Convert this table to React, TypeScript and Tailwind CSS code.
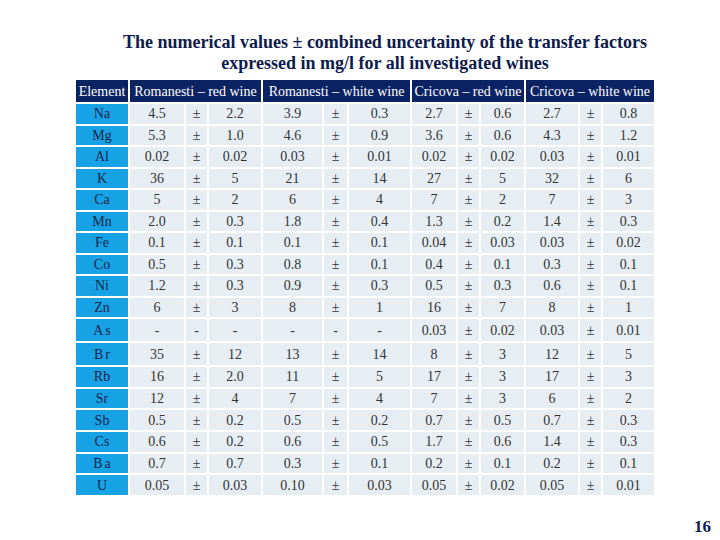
import React from "react";

const rows: [string, string[], number?][] = [
  ["Na", ["4.5", "±", "2.2", "3.9", "±", "0.3", "2.7", "±", "0.6", "2.7", "±", "0.8"]],
  ["Mg", ["5.3", "±", "1.0", "4.6", "±", "0.9", "3.6", "±", "0.6", "4.3", "±", "1.2"]],
  ["Al", ["0.02", "±", "0.02", "0.03", "±", "0.01", "0.02", "±", "0.02", "0.03", "±", "0.01"]],
  ["K", ["36", "±", "5", "21", "±", "14", "27", "±", "5", "32", "±", "6"]],
  ["Ca", ["5", "±", "2", "6", "±", "4", "7", "±", "2", "7", "±", "3"]],
  ["Mn", ["2.0", "±", "0.3", "1.8", "±", "0.4", "1.3", "±", "0.2", "1.4", "±", "0.3"]],
  ["Fe", ["0.1", "±", "0.1", "0.1", "±", "0.1", "0.04", "±", "0.03", "0.03", "±", "0.02"]],
  ["Co", ["0.5", "±", "0.3", "0.8", "±", "0.1", "0.4", "±", "0.1", "0.3", "±", "0.1"]],
  ["Ni", ["1.2", "±", "0.3", "0.9", "±", "0.3", "0.5", "±", "0.3", "0.6", "±", "0.1"]],
  ["Zn", ["6", "±", "3", "8", "±", "1", "16", "±", "7", "8", "±", "1"]],
  ["As", ["-", "-", "-", "-", "-", "-", "0.03", "±", "0.02", "0.03", "±", "0.01"], 1],
  ["Br", ["35", "±", "12", "13", "±", "14", "8", "±", "3", "12", "±", "5"], 1],
  ["Rb", ["16", "±", "2.0", "11", "±", "5", "17", "±", "3", "17", "±", "3"]],
  ["Sr", ["12", "±", "4", "7", "±", "4", "7", "±", "3", "6", "±", "2"]],
  ["Sb", ["0.5", "±", "0.2", "0.5", "±", "0.2", "0.7", "±", "0.5", "0.7", "±", "0.3"]],
  ["Cs", ["0.6", "±", "0.2", "0.6", "±", "0.5", "1.7", "±", "0.6", "1.4", "±", "0.3"]],
  ["Ba", ["0.7", "±", "0.7", "0.3", "±", "0.1", "0.2", "±", "0.1", "0.2", "±", "0.1"], 1],
  ["U", ["0.05", "±", "0.03", "0.10", "±", "0.03", "0.05", "±", "0.02", "0.05", "±", "0.01"]],
];

const headers = [
  "Romanesti – red wine",
  "Romanesti – white wine",
  "Cricova – red wine",
  "Cricova – white wine",
];

export default function App() {
  return (
    <div
      className="relative w-[720px] h-[540px] bg-white overflow-hidden"
      style={{ fontFamily: '"Liberation Serif", "Times New Roman", serif' }}
    >
      <div className="pt-[32px] pl-[50px] text-center text-[18px] leading-[21px] font-bold text-[#0d1b4d]">
        <div>The numerical values ± combined uncertainty of the transfer factors</div>
        <div>expressed in mg/l for all investigated wines</div>
      </div>

      <div className="ml-[76px] mt-[6px] grid gap-[2px] grid-cols-[52px_54px_21px_52px_59px_23px_61px_44px_21px_43px_52px_21px_51px] grid-rows-[22px_repeat(10,19.5px)_22px_22px_repeat(6,19.7px)] text-[14px]">
        <div className="bg-[#0b2263] text-white flex items-center justify-center whitespace-nowrap">
          Element
        </div>
        {headers.map((h) => (
          <div
            key={h}
            className="col-span-3 bg-[#0b2263] text-white flex items-center justify-center whitespace-nowrap"
          >
            {h}
          </div>
        ))}
        {rows.map(([el, vals, spaced]) => (
          <React.Fragment key={el}>
            <div
              className={
                "bg-[#17a2e6] text-[#18244a] flex items-center justify-center " +
                (spaced ? "tracking-[2px] pl-[2px]" : "")
              }
            >
              {el}
            </div>
            {vals.map((v, i) => (
              <div
                key={i}
                className="bg-[#e7eef3] text-[#333333] flex items-center justify-center"
              >
                {v}
              </div>
            ))}
          </React.Fragment>
        ))}
      </div>

      <div className="absolute left-[694px] top-[514px] text-[17px] font-bold text-[#0d1b4d]">
        16
      </div>
    </div>
  );
}
